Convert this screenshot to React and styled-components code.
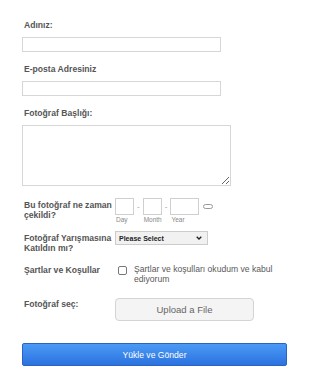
import React from 'react';
import styled, { createGlobalStyle } from 'styled-components';

const GlobalStyle = createGlobalStyle`
  html, body {
    margin: 0;
    padding: 0;
    background: #fff;
    font-family: 'Liberation Sans', Arial, sans-serif;
  }
`;

const Form = styled.form`
  padding: 20px 22px 0 22px;
  display: flex;
  flex-direction: column;
`;

const Field = styled.div`
  display: flex;
  flex-direction: column;
  margin-bottom: ${(p) => p.gap || 12}px;
`;

const Row = styled.div`
  display: flex;
  align-items: flex-start;
  margin-bottom: ${(p) => p.gap || 14}px;
`;

const Label = styled.label`
  font-size: 8.6px;
  font-weight: bold;
  color: #555;
  line-height: 10px;
  padding-left: 2px;
  margin-bottom: ${(p) => (p.stacked ? 7 : 0)}px;
  width: ${(p) => (p.stacked ? 'auto' : '91px')};
  flex-shrink: 0;
  padding-top: ${(p) => p.top || 0}px;
`;

const TextInput = styled.input`
  box-sizing: border-box;
  width: 199px;
  height: 15px;
  border: 1px solid #d6d6d6;
  margin: 0;
  padding: 0 3px;
  background: #fff;
`;

const TextArea = styled.textarea`
  box-sizing: border-box;
  width: 209px;
  height: 61px;
  border: 1px solid #d6d6d6;
  margin: 0;
  resize: both;
`;

const DateGroup = styled.div`
  display: flex;
  align-items: flex-start;
  gap: 3px;
  padding-top: 4px;
`;

const DatePart = styled.div`
  display: flex;
  flex-direction: column;
`;

const DateBox = styled.input`
  box-sizing: border-box;
  width: ${(p) => p.w}px;
  height: 17px;
  border: 1px solid #cfcfcf;
  margin: 0;
  padding: 0;
`;

const Sub = styled.span`
  font-size: 6.5px;
  color: #888;
  margin-top: 1px;
  padding-left: 1px;
`;

const Dash = styled.span`
  font-size: 8px;
  color: #999;
  line-height: 17px;
`;

const CalIcon = styled.span`
  display: inline-block;
  width: 8px;
  height: 3px;
  border: 1px solid #999;
  border-radius: 3px;
  margin-top: 6px;
  margin-left: 1px;
`;

const SelectWrap = styled.div`
  position: relative;
  display: flex;
  margin-top: 3px;
  width: 93px;
  height: 14px;
`;

const Select = styled.select`
  box-sizing: border-box;
  display: block;
  width: 93px;
  height: 14px;
  appearance: none;
  font-size: 7px;
  font-weight: bold;
  font-family: 'Liberation Sans', Arial, sans-serif;
  color: #222;
  border: 1px solid #ccc;
  border-radius: 0;
  background: #f1f1f1;
  margin: 0;
  padding: 0 3px;
`;

const Chevron = styled.svg`
  position: absolute;
  right: 6px;
  top: 50%;
  margin-top: -2px;
  pointer-events: none;
`;

const Check = styled.label`
  display: flex;
  align-items: flex-start;
  gap: 7px;
  font-size: 8.6px;
  color: #5a5a5a;
  line-height: 10px;
  margin-left: 3px;
  width: 172px;
`;

const Box = styled.span`
  display: inline-block;
  box-sizing: border-box;
  width: 9px;
  height: 9px;
  border: 1px solid #777;
  border-radius: 2px;
  margin-top: 2px;
  flex-shrink: 0;
`;

const Upload = styled.button`
  box-sizing: border-box;
  width: 139px;
  height: 23px;
  border: 1px solid #d4d4d4;
  border-radius: 4px;
  background: #f4f4f4;
  color: #666;
  font-size: 9.5px;
  font-family: 'Liberation Sans', Arial, sans-serif;
  margin: 0;
`;

const Submit = styled.button`
  box-sizing: border-box;
  width: 265px;
  height: 23px;
  border: 1px solid #2a63c4;
  border-radius: 2px;
  background: linear-gradient(#4a9af5, #2b72e0);
  color: #fff;
  font-size: 8.6px;
  font-family: 'Liberation Sans', Arial, sans-serif;
  margin: 8px 0 0 0;
`;

const App = () => {
  return (
    <>
      <GlobalStyle />
      <Form>
        <Field>
          <Label stacked>Adınız:</Label>
          <TextInput />
        </Field>
        <Field>
          <Label stacked>E-posta Adresiniz</Label>
          <TextInput />
        </Field>
        <Field gap={8}>
          <Label stacked>Fotoğraf Başlığı:</Label>
          <TextArea />
        </Field>
        <Row gap={5}>
          <Label top={6}>Bu fotoğraf ne zaman çekildi?</Label>
          <DateGroup>
            <DatePart>
              <DateBox w={19} />
              <Sub>Day</Sub>
            </DatePart>
            <Dash>-</Dash>
            <DatePart>
              <DateBox w={19} />
              <Sub>Month</Sub>
            </DatePart>
            <Dash>-</Dash>
            <DatePart>
              <DateBox w={29} />
              <Sub>Year</Sub>
            </DatePart>
            <CalIcon />
          </DateGroup>
        </Row>
        <Row gap={11}>
          <Label top={5}>Fotoğraf Yarışmasına Katıldın mı?</Label>
          <SelectWrap>
            <Select>
              <option>Please Select</option>
            </Select>
            <Chevron width="6" height="4" viewBox="0 0 6 4">
              <path d="M0.7 0.7 L3 3 L5.3 0.7" fill="none" stroke="#222" strokeWidth="1.4" />
            </Chevron>
          </SelectWrap>
        </Row>
        <Row gap={14}>
          <Label top={1}>Şartlar ve Koşullar</Label>
          <Check>
            <Box />
            <span>Şartlar ve koşulları okudum ve kabul ediyorum</span>
          </Check>
        </Row>
        <Row gap={14}>
          <Label top={1}>Fotoğraf seç:</Label>
          <Upload type="button">Upload a File</Upload>
        </Row>
        <Submit type="button">Yükle ve Gönder</Submit>
      </Form>
    </>
  );
};

export default App;
